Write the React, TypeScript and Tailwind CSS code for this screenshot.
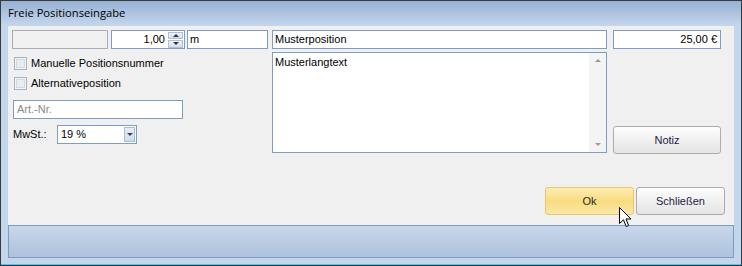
import React from 'react';

const ui = { fontFamily: '"Liberation Sans", Arial, sans-serif' };
const title = { fontFamily: '"Open Sans", "Noto Sans", sans-serif' };

const Field: React.FC<{ className?: string; children?: React.ReactNode }> = ({ className = '', children }) => (
  <div className={`h-[19px] border border-[#7f9dc0] bg-white flex items-center text-[11px] text-black ${className}`}>
    {children}
  </div>
);

const Check: React.FC<{ label: string; className?: string }> = ({ label, className = '' }) => (
  <div className={`flex items-center h-[13px] ${className}`}>
    <div className="w-[13px] h-[13px] border border-[#a4b4c8] bg-[#f4f4f4] flex items-center justify-center">
      <div className="w-[9px] h-[9px] border border-[#d4d9e0] bg-[#ececec]" />
    </div>
    <span className="ml-[4px] text-[11px] text-black leading-none">{label}</span>
  </div>
);

const Button: React.FC<{ label: string; primary?: boolean; className?: string }> = ({ label, primary, className = '' }) => (
  <div
    className={`w-[89px] h-[28px] rounded-[3px] border flex items-center justify-center text-[11px] ${
      primary
        ? 'border-[#e8c768] bg-gradient-to-b from-[#fdedb4] via-[#f8dc7e] to-[#f9e7a8] text-[#2a2a2a]'
        : 'border-[#acacac] bg-gradient-to-b from-[#fdfdfd] to-[#e4e4e4] text-[#1c1c44]'
    } ${className}`}
  >
    {label}
  </div>
);

const Cursor: React.FC = () => (
  <svg className="absolute left-[611px] top-[181px]" width="13" height="21" viewBox="0 0 13 21">
    <path
      d="M0.5 0.5 L0.5 16.5 L4.5 12.8 L7.2 19.5 L9.6 18.5 L7 12 L12 12 Z"
      fill="#ffffff"
      stroke="#000000"
      strokeWidth="1"
      strokeLinejoin="miter"
    />
  </svg>
);

export default function App() {
  return (
    <div className="w-[742px] h-[266px] bg-[#c2d6ec] border-x border-t border-[#3a3a3a] flex flex-col" style={ui}>
      {/* title bar */}
      <div className="h-[25px] bg-gradient-to-b from-[#97b1d4] to-[#c5d7ec] flex items-center px-[7px]">
        <span className="text-[11.2px] text-black" style={title}>
          Freie Positionseingabe
        </span>
      </div>

      {/* client area */}
      <div className="mx-[7px] h-[199px] bg-[#f0f0f0] relative flex pt-[4px] pl-[4px]">
        {/* left column */}
        <div className="w-[260px] flex flex-col">
          <div className="flex">
            <div className="w-[96px] h-[19px] border border-[#a8aeb8] bg-[#f0f0f0]" />
            <Field className="w-[74px] ml-[3px] justify-between pr-[1px]">
              <span className="flex-1 text-right pr-[3px]">1,00</span>
              <div className="w-[15px] h-[16px] flex flex-col gap-[1px]">
                <div className="flex-1 border border-[#b3c0d2] bg-gradient-to-b from-[#eef3f9] to-[#d3deec] flex items-center justify-center">
                  <div className="w-0 h-0 border-x-[3px] border-x-transparent border-b-[3px] border-b-[#333]" />
                </div>
                <div className="flex-1 border border-[#b3c0d2] bg-gradient-to-b from-[#eef3f9] to-[#d3deec] flex items-center justify-center">
                  <div className="w-0 h-0 border-x-[3px] border-x-transparent border-t-[3px] border-t-[#333]" />
                </div>
              </div>
            </Field>
            <Field className="w-[81px] ml-[2px] pl-[2px]">m</Field>
          </div>

          <Check label="Manuelle Positionsnummer" className="mt-[8px] ml-[2px]" />
          <Check label="Alternativeposition" className="mt-[7px] ml-[2px]" />

          <Field className="w-[170px] ml-[1px] mt-[10px] pl-[3px]">
            <span className="text-[#8a8a8a]">Art.-Nr.</span>
          </Field>

          <div className="flex items-center mt-[6px] ml-[1px]">
            <span className="w-[44px] text-[11px] text-black">MwSt.:</span>
            <Field className="w-[80px] pl-[3px] pr-[1px] justify-between">
              <span>19 %</span>
              <div className="w-[11px] h-[15px] border border-[#a9bbd4] bg-gradient-to-b from-[#e4ecf6] to-[#d2deed] flex items-center justify-center">
                <div className="w-0 h-0 border-x-[3px] border-x-transparent border-t-[3px] border-t-[#444]" />
              </div>
            </Field>
          </div>
        </div>

        {/* middle column */}
        <div className="w-[335px] flex flex-col">
          <Field className="w-[335px] pl-[2px]">Musterposition</Field>
          <div className="mt-[3px] w-[335px] h-[101px] border border-[#7f9dc0] bg-white flex">
            <div className="flex-1 text-[11px] text-black pl-[2px] pt-[1px]">Musterlangtext</div>
            <div className="w-[17px] bg-[#f4f4f4] flex flex-col justify-between items-center py-[6px]">
              <div className="w-0 h-0 border-x-[3px] border-x-transparent border-b-[3px] border-b-[#9a9a9a]" />
              <div className="w-0 h-0 border-x-[3px] border-x-transparent border-t-[3px] border-t-[#9a9a9a]" />
            </div>
          </div>
        </div>

        {/* right column */}
        <div className="ml-[6px] w-[108px] flex flex-col">
          <Field className="w-[108px] justify-end pr-[3px]">25,00 €</Field>
          <Button label="Notiz" className="w-[108px] h-[27px] mt-[77px]" />
        </div>

        {/* dialog buttons */}
        <div className="absolute left-[537px] top-[161px] flex gap-[2px]">
          <Button label="Ok" primary />
          <Button label="Schließen" />
        </div>
        <Cursor />
      </div>

      {/* status panel */}
      <div className="mx-[7px] h-[33px] border border-[#7f9bc0] bg-gradient-to-b from-[#c7d6ea] to-[#aec2de]" />
      <div className="flex-1" />
      <div className="h-[1px] bg-[#44c8f5]" />
      <div className="h-[1px] bg-[#1f3a44]" />
    </div>
  );
}
